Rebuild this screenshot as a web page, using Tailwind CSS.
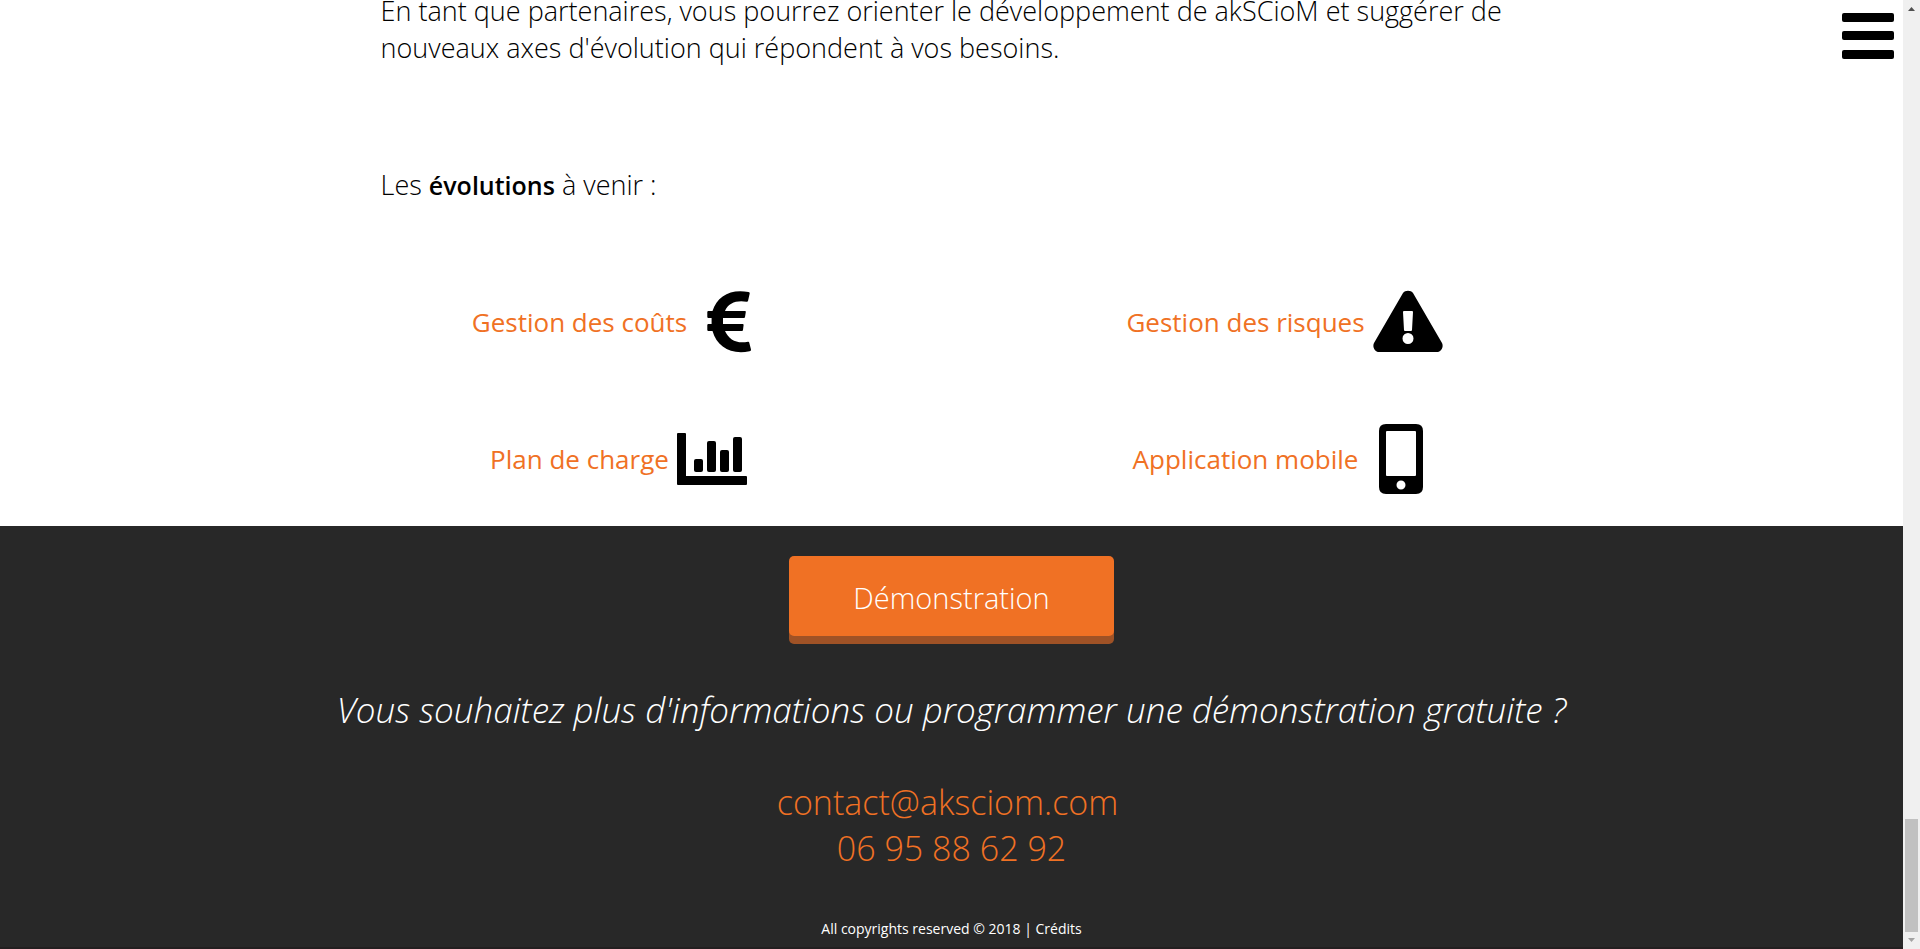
<!DOCTYPE html>
<html lang="fr">
<head>
<meta charset="utf-8">
<title>akSCioM</title>
<script src="https://cdn.jsdelivr.net/npm/@tailwindcss/browser@4"></script>
</head>
<body class="flex h-screen overflow-hidden bg-white font-['Open_Sans',sans-serif] font-light text-black">
<div class="relative flex min-w-0 flex-1 flex-col">
  <main class="-mt-2 text-[27px] leading-[37px]">
    <div class="mx-auto w-[60%]">
      <p>En tant que partenaires, vous pourrez orienter le développement de akSCioM et suggérer de nouveaux axes d'évolution qui répondent à vos besoins.</p>
      <p class="mt-[100px]">Les <strong class="text-[25px] leading-none font-semibold">évolutions</strong> à venir :</p>
    </div>
    <ul class="mx-auto mt-[84px] grid w-[70%] grid-cols-2 gap-y-[67px] pb-8 text-[26px] font-medium text-[#f07124]">
      <li class="flex h-[70px] items-center justify-center gap-2">Gestion des coûts
        <svg class="h-[70px] w-[70px] text-black" viewBox="0 0 70 70" fill="currentColor"><path d="M53.500 5Q55 5 54.700 6.500L53 14Q52.700 15 51.500 14.800C42 13 33 16 30 24H50Q51 24 50.800 25L50 30Q49.800 31 49 31H28V37H47.500Q48.800 37 48.600 38L48 43Q47.800 44 47 44H30C34 53 42 57 53 54.700Q54 54.500 54.200 55.500L56 62.500Q56.300 64 54.500 64.300C36 68 22 60 17.500 44H13.500Q12.300 44 12.300 43V38Q12.300 37 13.500 37H16.600V31H13.500Q12.300 31 12.300 30V25Q12.300 24 13.500 24H17.500C22 9 36 1.500 53.500 5Z"/></svg>
      </li>
      <li class="flex h-[70px] items-center justify-center gap-2">Gestion des risques
        <svg class="h-[70px] w-[70px] text-black" viewBox="0 0 70 70" fill="currentColor"><path fill-rule="evenodd" d="M30 6C32 3 38 3 40 6L69 56C71 60 68 65 64 65H6C2 65 -1 60 1 56ZM30 25 31 43Q31 44 32 44H38Q39 44 39 43L40 25Q40 24 39 24H31Q30 24 30 25ZM35 46A5.500 5.500 0 1 0 35 57A5.500 5.500 0 1 0 35 46Z"/></svg>
      </li>
      <li class="flex h-[70px] items-center justify-center gap-2">Plan de charge
        <svg class="h-[70px] w-[70px] text-black" viewBox="0 0 70 70" fill="currentColor"><path d="M1 9H8Q9 9 9 10V52H69Q70 52 70 53V60Q70 61 69 61H1Q0 61 0 60V10Q0 9 1 9Z"/><rect x="17" y="35" width="9" height="13" rx="2"/><rect x="30" y="17" width="9" height="31" rx="2"/><rect x="43" y="26" width="9" height="22" rx="2"/><rect x="56" y="13" width="9" height="35" rx="2"/></svg>
      </li>
      <li class="flex h-[70px] items-center justify-center gap-2">Application mobile
        <svg class="h-[70px] w-[70px] text-black" viewBox="0 0 70 70" fill="currentColor"><path fill-rule="evenodd" d="M20 0H50Q57 0 57 7V63Q57 70 50 70H20Q13 70 13 63V7Q13 0 20 0ZM21 7Q20 7 20 8V51Q20 52 21 52H49Q50 52 50 51V8Q50 7 49 7ZM35 56.500A4.500 4.500 0 1 0 35 65.500A4.500 4.500 0 1 0 35 56.500Z"/></svg>
      </li>
    </ul>
  </main>
  <footer class="flex flex-1 flex-col items-center border-b-2 border-[#231f20] bg-[#282828] pt-[30px] text-white">
    <button type="button" class="h-20 w-[325px] rounded-[5px] bg-[#f07124] pt-1 text-[29px] shadow-[0_8px_0_#9f5226]">Démonstration</button>
    <p class="mt-[50px] text-[35px] leading-[48px] italic">Vous souhaitez plus d'informations ou programmer une démonstration gratuite ?</p>
    <address class="mt-[45px] flex flex-col items-center text-[34px] leading-[46px] text-[#f07124] not-italic">
      <a href="mailto:contact@aksciom.com" class="pr-2">contact@aksciom.com</a>
      <a href="tel:0695886292">06 95 88 62 92</a>
    </address>
    <p class="mt-12 text-sm leading-5 font-normal">All copyrights reserved © 2018 | <a href="#">Crédits</a></p>
  </footer>
  <button type="button" aria-label="Menu" class="absolute top-[13px] right-[9px] h-[46px] w-[52px]">
    <svg class="h-full w-full" viewBox="0 0 52 46"><rect width="52" height="9" rx="2"/><rect y="18" width="52" height="9" rx="2"/><rect y="37" width="52" height="9" rx="2"/></svg>
  </button>
</div>
<div class="flex w-[17px] shrink-0 flex-col items-center bg-[#f0f0f0]" aria-hidden="true">
  <svg class="h-[17px] w-[17px]" viewBox="0 0 17 17"><path fill="#505050" d="M5 11H12L8.500 7Z"/></svg>
  <div class="mt-auto h-[113px] w-[13px] bg-[#c1c1c1]"></div>
  <svg class="h-[17px] w-[17px]" viewBox="0 0 17 17"><path fill="#a3a3a3" d="M5 6H12L8.500 10Z"/></svg>
</div>
</body>
</html>
